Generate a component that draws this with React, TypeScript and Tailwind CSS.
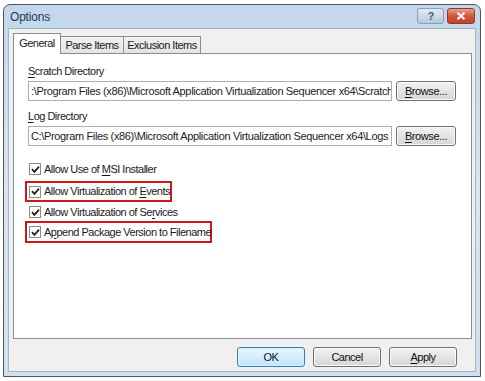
import React from "react";

const font = { fontFamily: '"Liberation Sans", Arial, sans-serif' };

function U({ children }: { children: React.ReactNode }) {
  return <span className="underline underline-offset-[2px] decoration-[1px]">{children}</span>;
}

function Check() {
  return (
    <div className="w-[12px] h-[12px] border border-[#8a8a8a] bg-white flex items-center justify-center shrink-0">
      <svg width="9" height="9" viewBox="0 0 9 9">
        <path d="M1 4.2 L3.4 6.8 L8 1.6" stroke="#222" strokeWidth="1.8" fill="none" />
      </svg>
    </div>
  );
}

function Row({ children }: { children: React.ReactNode }) {
  return (
    <div className="flex items-center gap-[3px] h-[14px] whitespace-nowrap">
      <Check />
      <span>{children}</span>
    </div>
  );
}

function Btn({ children, w, def }: { children: React.ReactNode; w: string; def?: boolean }) {
  return (
    <div
      className={`${w} h-[20px] rounded-[3px] border flex items-center justify-center text-[#111] whitespace-nowrap ${
        def
          ? "border-[#3c7fb1] bg-gradient-to-b from-[#eaf6fd] to-[#bee6fd] shadow-[inset_0_0_0_1px_#d9f0fc]"
          : "border-[#707070] bg-gradient-to-b from-[#f2f2f2] to-[#d6d6d6] shadow-[inset_0_0_0_1px_#fbfbfb]"
      }`}
    >
      {children}
    </div>
  );
}

export default function App() {
  return (
    <div
      className="w-[485px] h-[381px] bg-white overflow-hidden text-[11px] tracking-[-0.5px] text-[#1a1a1a]"
      style={font}
    >
      <div className="ml-[3px] mt-[4px] w-[478px] h-[373px] rounded-t-[7px] border border-[#4b5460] bg-gradient-to-b from-[#c3d7eb] via-[#d8e5f2] to-[#cfe0f0] flex flex-col">
        {/* title bar */}
        <div className="h-[23px] flex items-center pl-[6px] pr-[5px] shrink-0">
          <span className="text-[12px] tracking-[-0.2px] text-[#1e395b] mt-[1px]">Options</span>
          <div className="ml-auto flex gap-[3px] mt-[-1px]">
            <div className="w-[27px] h-[16px] rounded-[3px] border border-[#8a9db4] bg-gradient-to-b from-[#e3ebf4] to-[#b6c8dc] flex items-center justify-center text-[#4d6080] text-[11px] font-bold leading-none">
              ?
            </div>
            <div className="w-[28px] h-[16px] rounded-[3px] border border-[#8c3a30] bg-gradient-to-b from-[#e8a08c] via-[#d1543a] to-[#c44326] flex items-center justify-center">
              <svg width="10" height="8" viewBox="0 0 10 8">
                <path d="M1.5 0.8 L8.5 7.2 M8.5 0.8 L1.5 7.2" stroke="#fff" strokeWidth="2" />
              </svg>
            </div>
          </div>
        </div>
        {/* client */}
        <div className="mx-[4px] mb-[4px] flex-1 bg-[#f0f0f0] border border-[#a5b3c3] flex flex-col px-[4px]">
          {/* tabs */}
          <div className="flex items-end h-[23px] mt-[1px] whitespace-nowrap">
            <div className="w-[48px] h-[21px] bg-white border border-[#898c95] border-b-0 flex items-center justify-center relative z-10 mb-[-1px] pb-[1px]">
              General
            </div>
            <div className="w-[63px] h-[17px] bg-gradient-to-b from-[#f3f3f3] to-[#e3e3e3] border border-[#898c95] border-b-0 border-l-0 flex items-center justify-center">
              Parse Items
            </div>
            <div className="w-[77px] h-[17px] bg-gradient-to-b from-[#f3f3f3] to-[#e3e3e3] border border-[#898c95] border-b-0 border-l-0 flex items-center justify-center">
              Exclusion Items
            </div>
          </div>
          {/* panel */}
          <div className="w-[459px] h-[286px] bg-white border border-[#898c95] pl-[14px] pt-[10px] flex flex-col">
            <div className="h-[12px] leading-[12px] mt-[1px]">
              <U>S</U>cratch Directory
            </div>
            <div className="flex gap-[4px] mt-[4px]">
              <div className="w-[364px] h-[20px] border border-[#abadb3] flex items-center pl-[2px] overflow-hidden whitespace-nowrap text-[#222] tracking-[-0.35px]">
                :\Program Files (x86)\Microsoft Application Virtualization Sequencer x64\Scratch
              </div>
              <Btn w="w-[60px]">
                <span className="tracking-[-0.4px]">
                  <U>B</U>rowse...
                </span>
              </Btn>
            </div>
            <div className="h-[12px] leading-[12px] mt-[9px]">
              <U>L</U>og Directory
            </div>
            <div className="flex gap-[4px] mt-[4px]">
              <div className="w-[364px] h-[20px] border border-[#abadb3] flex items-center pl-[2px] overflow-hidden whitespace-nowrap text-[#222] tracking-[-0.35px]">
                C:\Program Files (x86)\Microsoft Application Virtualization Sequencer x64\Logs
              </div>
              <Btn w="w-[60px]">
                <span className="tracking-[-0.4px]">
                  <U>B</U>rowse...
                </span>
              </Btn>
            </div>
            <div className="flex flex-col mt-[16px] pl-[1px]">
              <Row>
                Allow Use of <U>M</U>SI Installer
              </Row>
              <div className="ml-[-4px] mt-[5px] w-[147px] h-[21px] border-[2.5px] border-[#d0171b] flex items-center pl-[2px]">
                <Row>
                  Allow Virtualization of <U>E</U>vents
                </Row>
              </div>
              <div className="mt-[3px]">
                <Row>
                  Allow Virtualization of Se<U>r</U>vices
                </Row>
              </div>
              <div className="ml-[-4px] mt-[2px] w-[187px] h-[22px] border-[2.5px] border-[#d0171b] flex items-center pl-[2px]">
                <Row>
                  A<U>p</U>pend Package Version to Filename
                </Row>
              </div>
            </div>
          </div>
          {/* buttons */}
          <div className="flex justify-end gap-[8px] mt-[8px] pr-[14px]">
            <Btn w="w-[68px]" def>
              OK
            </Btn>
            <Btn w="w-[68px]">Cancel</Btn>
            <Btn w="w-[68px]">
              <span>
                <U>A</U>pply
              </span>
            </Btn>
          </div>
        </div>
      </div>
    </div>
  );
}
